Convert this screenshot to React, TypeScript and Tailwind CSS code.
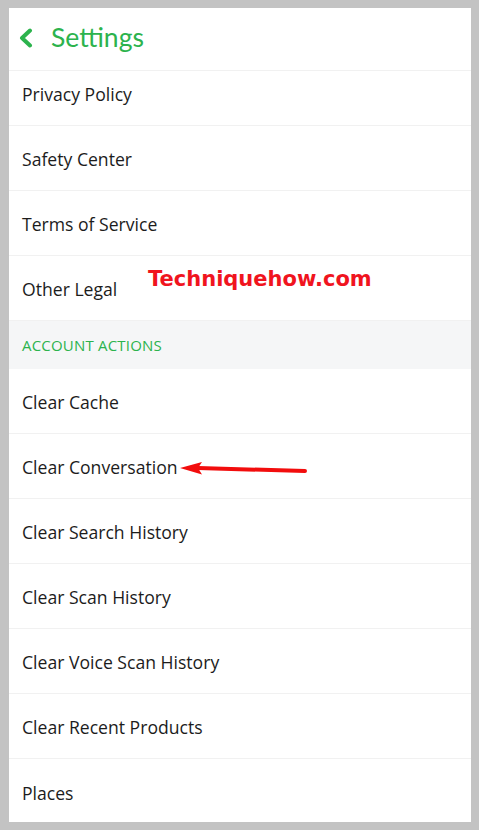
const topRows = ['Safety Center', 'Terms of Service', 'Other Legal']
const actionRows = [
    'Clear Cache',
    'Clear Conversation',
    'Clear Search History',
    'Clear Scan History',
    'Clear Voice Scan History',
    'Clear Recent Products',
]

function Row ({ label }: { label: string }) {
    return <div className="flex items-center h-[65px] pt-[2px] px-[13px] border-b border-[#f1f1f1] text-[17.6px] text-[#1c1c1c]">
        {label}
    </div>
}

export default function App () {
    return <div className="w-[479px] h-[830px] bg-[#c3c3c3] pt-[8px] pb-[8px] pl-[9px] pr-[8px]" style={{ fontFamily: '"Open Sans", Lato, sans-serif' }}>
        <div className="relative w-full h-full bg-white overflow-hidden flex flex-col">
            <div className="flex items-center h-[63px] border-b border-[#f1f1f1] pl-[9px] pb-[3px] text-[#2cb34d]">
                <svg width="15" height="20" viewBox="0 0 15 20">
                    <path d="M12 2.5 L4 10 L12 17.5" fill="none" stroke="#2cb34d" strokeWidth="4" strokeLinecap="round" strokeLinejoin="round" />
                </svg>
                <span className="ml-[18px] text-[26.5px]" style={{ fontFamily: 'Lato, sans-serif' }}>Settings</span>
            </div>
            <div className="flex items-center h-[55px] pb-[8px] px-[13px] border-b border-[#f1f1f1] text-[17.6px] text-[#1c1c1c]">
                Privacy Policy
            </div>
            {topRows.map(r => <Row key={r} label={r} />)}
            <div className="flex items-center h-[48px] bg-[#f5f6f7] px-[13px] text-[15px] tracking-[0.2px] text-[#2cb34d]">
                ACCOUNT ACTIONS
            </div>
            {actionRows.map(r => <Row key={r} label={r} />)}
            <div className="flex items-center h-[62px] pt-[7px] px-[13px] text-[17.6px] text-[#1c1c1c]">Places</div>

            <div
                className="absolute left-[139px] top-[256px] text-[21px] font-bold text-[#f0141e]"
                style={{ fontFamily: '"DejaVu Sans", Verdana, sans-serif' }}
            >
                Techniquehow.com
            </div>
            <svg className="absolute left-[167px] top-[450px]" width="136" height="20" viewBox="0 0 136 20">
                <line x1="22" y1="10" x2="129" y2="13" stroke="#f20d0d" strokeWidth="4" strokeLinecap="round" />
                <polygon points="4,10 26,4 22,10 26,16.5" fill="#f20d0d" />
            </svg>
        </div>
    </div>
}
